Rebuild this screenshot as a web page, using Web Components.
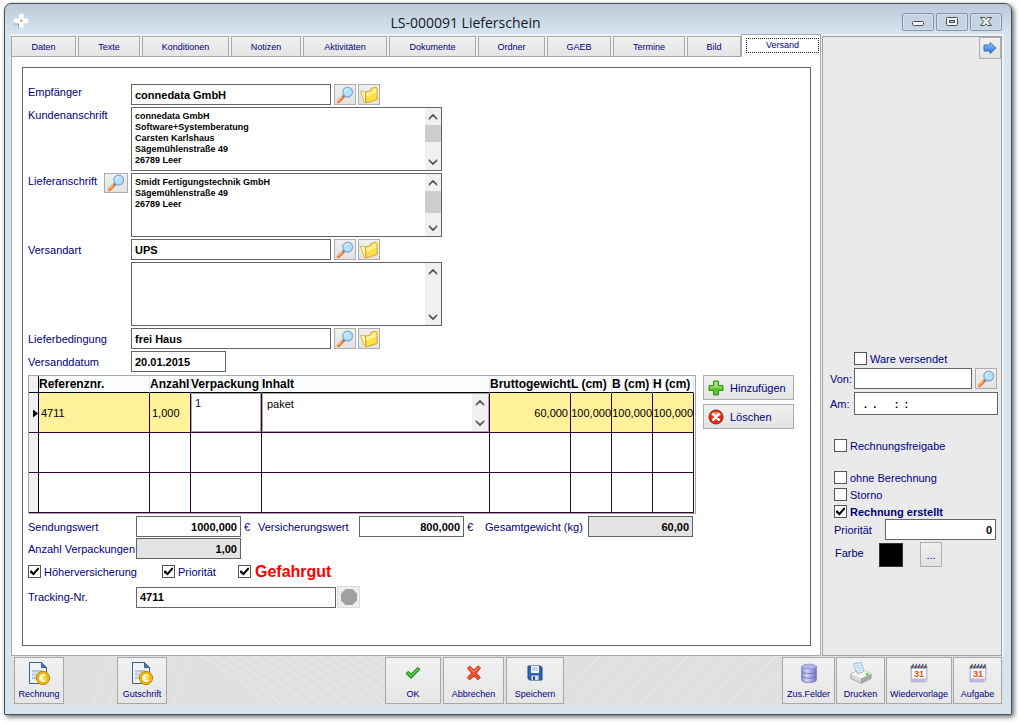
<!DOCTYPE html>
<html lang="de">
<head>
<meta charset="utf-8">
<title>LS-000091 Lieferschein</title>
<style>
  html { background: #fff; }
  body {
    margin: 0;
    box-sizing: border-box;
    min-height: 100vh;
    padding: 3px 8px 8px 4px;
    display: flex;
    flex-direction: column;
    font: 11px "Liberation Sans", Arial, sans-serif;
    color: #00007d;
  }
</style>
</head>
<body>
<delivery-note></delivery-note>

<script>
const ICONS = {
  plus: `<svg viewBox="0 0 16 16"><path d="M5.500 1h5v4.500H15v5h-4.500V15h-5v-4.500H1v-5h4.500z" fill="#5cc433" stroke="#2f8f1a"/><path d="M6.500 2h3v4.500H14v1H2v-1h4.500z" fill="#a5e67c"/></svg>`,
  cancel: `<svg viewBox="0 0 16 16"><circle cx="8" cy="8" r="7" fill="#dc2f14" stroke="#a81a0a"/><path d="M2.500 6a6 5 0 0 1 11 0Q8 9 2.500 6z" fill="#f58a70"/><path d="M5.200 5.200l5.600 5.600M10.800 5.200l-5.600 5.600" stroke="#fff" stroke-width="2.400" stroke-linecap="round"/></svg>`,
  lens: `<svg viewBox="0 0 18 18"><path d="M7.200 10.800L2.400 15.600" stroke="#e8782e" stroke-width="3.200" stroke-linecap="round"/><path d="M6.400 10.600L2 15" stroke="#ffc184" stroke-width="1.300" stroke-linecap="round"/><path d="M8.400 9.600l-1.400 1.400" stroke="#6b7f9c" stroke-width="2.600"/><circle cx="11.700" cy="6.100" r="4.900" fill="#b5e2fb" stroke="#86a8d2" stroke-width="1.300"/><path d="M8.300 6a3.400 3.400 0 0 1 4.600-3.200Q9.800 3.400 8.300 6z" fill="#fff"/></svg>`,
  folder: `<svg viewBox="0 0 18 18"><path d="M.5 5.500L3 5l2.500 1v11L4 15.500z" fill="#fff3b4" stroke="#d0a52c" stroke-width=".8"/><path d="M5.500 6l5-1.200.6-2.400 5-1.200 1 1v11.300L6 17z" fill="#ffdf45" stroke="#cda021" stroke-width=".9"/><path d="M6.300 6.800l5.400-1.300.6-2.400 3.900-.9v4.300l-9.800 4z" fill="#fff09a"/></svg>`,
  arrow: `<svg viewBox="0 0 16 16"><defs><linearGradient id="a" x2="0" y2="1"><stop stop-color="#9ad0fb"/><stop offset="1" stop-color="#1d6fd0"/></linearGradient></defs><path d="M2 5h6V2.500L14 8l-6 5.500V11H2z" fill="url(#a)" stroke="#2a6cba" stroke-width=".9"/></svg>`,
  invoice: `<svg viewBox="0 0 24 24"><path d="M2.500 1.500h12l5 5v16h-17z" fill="#eef3fb" stroke="#3e5f8a"/><path d="M14.500 1.500v5h5z" fill="#4e7db5" stroke="#3e5f8a"/><path d="M5 9h10v9H5z" fill="#bac7da"/><path d="M5 12h9M5 15h9" stroke="#eef3fb"/><circle cx="16" cy="17" r="6.600" fill="#f3bd0c" stroke="#b88700"/><circle cx="16" cy="17" r="4.600" fill="#ffd02e" stroke="#d9a300" stroke-width=".7"/><path d="M18.200 14.800a3 3 0 1 0 0 4.400M12.300 16.400h4M12.300 17.900h4" stroke="#fff" stroke-width="1.400" fill="none"/></svg>`,
  ok: `<svg viewBox="0 0 16 16"><path d="M1 8.500L3.200 6.300 6 9l6.500-6.500 2.500 1.800L6 13.500z" fill="#2fb02a" stroke="#1b8a1a" stroke-linejoin="round"/><path d="M3 7.800L6 10.500 12.800 4" stroke="#7fe06c" fill="none"/></svg>`,
  cross: `<svg viewBox="0 0 16 16"><path d="M3.500 1L8 5l4-4.200L14.500 3l-4 5 3.800 4.500L12 14.800 8 11l-4.500 4L1.300 12.500 5.500 8 1.500 3.500z" fill="#f0502c" stroke="#c5361c" stroke-linejoin="round"/><path d="M3.500 3L8 7l4-4" stroke="#ff9c7c" fill="none"/></svg>`,
  save: `<svg viewBox="0 0 16 16"><path d="M1 1h12.500L15 2.500V15H2.500L1 13.500z" fill="#2c64b8" stroke="#1b478c"/><path d="M4 1h8v7H4z" fill="#f4f6fa"/><path d="M5 3h6M5 5h6" stroke="#9fb0c4"/><path d="M4.500 10.500h7V15h-7z" fill="#d9e0ea"/><path d="M6 11.500h2V15H6z" fill="#1b478c"/></svg>`,
  database: `<svg viewBox="0 0 22 24"><defs><linearGradient id="d"><stop stop-color="#8f8fd4"/><stop offset=".35" stop-color="#d2d2fa"/><stop offset="1" stop-color="#7676be"/></linearGradient></defs><path d="M3 5v14.500c0 4 16 4 16 0V5z" fill="url(#d)" stroke="#7272ba" stroke-width=".8"/><path d="M3 10c0 3.500 16 3.500 16 0M3 15c0 3.500 16 3.500 16 0" stroke="#6b6bb4" fill="none" stroke-width=".9"/><ellipse cx="11" cy="5" rx="8" ry="2.600" fill="#b7b7f0" stroke="#8585c8" stroke-width=".8"/></svg>`,
  printer: `<svg viewBox="0 0 24 24"><path d="M4 2l8-1.500 4 10.500-8 2.500z" fill="#e2f1ff" stroke="#7ea8cf" stroke-width=".8"/><path d="M6.500 4.500l5-1M7.500 7l5-1M8.500 9.500l5-1" stroke="#9cc6ec"/><path d="M1 13l6-3 2 2.500 6-2 .5-1.500 7.500 4v5l-11 5.500L1 18z" fill="#d8d8d8" stroke="#909090" stroke-width=".8"/><path d="M1 13l11 5 11-5-7.500-4L15 11l-7 2.500L6 10.500z" fill="#f4f4f4"/><path d="M12 18v5.500l11-5.500v-5z" fill="#a6a6a6"/><circle cx="18.800" cy="13.300" r="1.300" fill="#3ed22b"/></svg>`,
  calendar: `<svg viewBox="0 0 22 24"><path d="M2.500 5h17v15l-2 1.500h-15z" fill="#fdfdff" stroke="#9a9ac4"/><path d="M2 4h18v3H2z" fill="#85859a"/><path d="M3 7l2-5M6.500 7l2-5M10 7l2-5M13.500 7l2-5M17 7l2-5" stroke="#40404a" stroke-width="1.100"/><path d="M3 18h16l-2 3H3z" fill="#b9b9e2"/><text x="11" y="16.500" text-anchor="middle" font-family="Liberation Sans, Arial, sans-serif" font-weight="bold" font-size="10" fill="#f0500c">31</text></svg>`,
  stop: `<svg viewBox="0 0 18 18"><path d="M5.500 1h7L17 5.500v7L12.500 17h-7L1 12.500v-7z" fill="#a0a0a0"/></svg>`,
  up: `<svg viewBox="0 0 10 8"><path d="M1 6.500V5l4-4 4 4v1.500L5 3z" fill="#555" stroke="#555" stroke-width=".6"/></svg>`,
  down: `<svg viewBox="0 0 10 8"><path d="M1 1.500V3l4 4 4-4V1.500L5 5z" fill="#555" stroke="#555" stroke-width=".6"/></svg>`,
  logo: `<svg viewBox="0 0 16 16"><path d="M6 1h4.500v4.500H15V10h-4.500v5H6v-5H1V5.500h5z" fill="#fff" stroke="#e6ecf1" stroke-width=".8"/><path d="M1 11h4.500v4.500" stroke="#8ea0b0" fill="none" stroke-width=".9"/><circle cx="8.200" cy="7.800" r="1.200" fill="#f08a3c"/></svg>`,
  minimize: `<svg viewBox="0 0 16 16"><rect x="2.500" y="7.500" width="11" height="4" rx="1" fill="#f4f4f4" stroke="#4b5058"/></svg>`,
  maximize: `<svg viewBox="0 0 16 16"><rect x="2.500" y="3.500" width="11" height="8" rx="1" fill="#f4f4f4" stroke="#4b5058"/><rect x="5.500" y="6.500" width="5" height="2" fill="#b9c8d7" stroke="#4b5058"/></svg>`,
  close: `<svg viewBox="0 0 16 16"><path d="M2.500 3.500h4L8 5.300l1.500-1.800h4L10.200 7.500l3.300 4h-4L8 9.700l-1.500 1.800h-4l3.300-4z" fill="#f4f4f4" stroke="#4b5058"/></svg>`
};

function define(name, render) {
  customElements.define(name, class extends HTMLElement {
    constructor() { super(); this.attachShadow({ mode: "open" }); }
    attr(key, fallback = "") { return this.getAttribute(key) ?? fallback; }
    connectedCallback() {
      if (this.shadowRoot.childNodes.length) return;
      const template = document.createElement("template");
      template.innerHTML = render(this);
      this.shadowRoot.append(template.content.cloneNode(true));
    }
  });
}

define("ui-icon", el => `
  <style>
    :host { display: block; flex: none; width: var(--icon-size, 18px); height: var(--icon-size, 18px); }
    svg { display: block; width: 100%; height: 100%; }
  </style>${ICONS[el.attr("name")]}`);

define("icon-button", el => `
  <style>
    :host { display: block; flex: none; width: 22px; height: 21px; }
    button {
      box-sizing: border-box; width: 100%; height: 100%; padding: 0;
      display: flex; align-items: center; justify-content: center;
      border: 1px solid #adadad; background: linear-gradient(#f0f0f0, #e2e2e2);
      font: inherit; color: #00007d;
    }
    button:disabled { border-color: #dcdcdc; background: #eee; }
  </style>
  <button type="button" aria-label="${el.attr("label")}" ${el.hasAttribute("disabled") ? "disabled" : ""}>${
    el.hasAttribute("icon") ? `<ui-icon name="${el.attr("icon")}"></ui-icon>` : "<slot></slot>"}</button>`);

define("caption-button", el => `
  <style>
    :host { display: block; width: 32px; height: 18px; --icon-size: 16px; }
    button {
      box-sizing: border-box; width: 100%; height: 100%; padding: 0;
      display: flex; align-items: center; justify-content: center;
      border: 1px solid #8293ab; border-radius: 2px; background: #c6d4e2;
      box-shadow: inset 0 0 0 1px #d3dfeb;
    }
  </style>
  <button type="button" aria-label="${el.attr("label")}"><ui-icon name="${el.attr("icon")}"></ui-icon></button>`);

define("app-window", el => `
  <style>
    :host {
      box-sizing: border-box; flex: 1; display: flex; flex-direction: column;
      border: 1px solid #4a4e52; border-radius: 7px 7px 1px 1px;
      padding: 0 7px 7px 6px;
      background: linear-gradient(#bccad8, #d6e4f0 30px);
      box-shadow: 2px 2px 5px rgba(0, 0, 0, .6);
    }
    header { height: 30px; display: flex; align-items: center; }
    header > ui-icon { --icon-size: 16px; margin: 4px 0 0 2px; }
    h1 {
      flex: 1; margin: 0; padding-top: 8px; text-align: center;
      font: 14px/20px "Open Sans", "Noto Sans", sans-serif; color: #15151f;
    }
    .caption { display: flex; gap: 2px; padding: 6px 2px 0 0; }
    main { flex: 1; display: flex; flex-direction: column; background: #f1f1f1; }
  </style>
  <header>
    <ui-icon name="logo"></ui-icon>
    <h1>${el.attr("heading")}</h1>
    <div class="caption">
      <caption-button icon="minimize" label="Minimieren"></caption-button>
      <caption-button icon="maximize" label="Maximieren"></caption-button>
      <caption-button icon="close" label="Schließen"></caption-button>
    </div>
  </header>
  <main><slot></slot></main>`);

const TABS = [["Daten", 65], ["Texte", 62], ["Konditionen", 87], ["Notizen", 70], ["Aktivitäten", 84],
  ["Dokumente", 87], ["Ordner", 67], ["GAEB", 64], ["Termine", 72], ["Bild", 54], ["Versand", 78]];
define("tab-strip", () => `
  <style>
    :host {
      display: grid; align-items: end; gap: 2px; height: 22px;
      grid-template-columns: ${TABS.map(([, size]) => `minmax(0, ${size}fr)`).join(" ")};
    }
    button {
      box-sizing: border-box; height: 20px; padding: 0; min-width: 0;
      border: 1px solid #a8a8a8; border-bottom: 0; background: linear-gradient(#f1f1f1, #e4e4e4);
      font: 9px "Liberation Sans", Arial, sans-serif; color: #00007d;
    }
    button[aria-selected=true] {
      position: relative; height: 23px; margin: 0 0 -1px -2px; padding: 3px 1px 4px 4px; background: #fff;
    }
    span { display: block; }
    [aria-selected=true] span { line-height: 13px; border: 1px dotted #222; }
  </style>
  ${TABS.map(([text]) => `<button type="button" role="tab" aria-selected="${text === "Versand"}"><span>${text}</span></button>`).join("")}`);

define("scroll-track", el => `
  <style>
    :host {
      flex: none; width: 16px; display: flex; flex-direction: column; align-items: center;
      background: #f0f0f0; box-sizing: border-box; padding: 5px 0 4px;
    }
    ui-icon { width: 10px; height: 8px; }
    div { flex: 1; width: 100%; padding-top: 4px; }
    i { display: block; height: ${el.attr("thumb", "0")}px; background: #cdcdcd; }
  </style>
  <ui-icon name="up"></ui-icon><div><i></i></div><ui-icon name="down"></ui-icon>`);

define("form-field", el => {
  const hint = el.hasAttribute("hint") ? `aria-label="${el.attr("hint")}"` : "";
  const control = el.hasAttribute("memo")
    ? `<div class="memo"><textarea id="field" ${hint}>${el.attr("value")}</textarea><scroll-track thumb="${el.attr("thumb", "0")}"></scroll-track></div>`
    : `<input id="field" type="text" value="${el.attr("value")}" ${el.hasAttribute("readonly") ? "readonly" : ""}>`;
  return `
  <style>
    :host { display: flex; align-items: center; }
    :host([top]) { align-items: flex-start; }
    .caption { flex: none; box-sizing: border-box; width: var(--label-width, 103px); display: flex; justify-content: space-between; padding-right: 3px; }
    label { line-height: 16px; white-space: nowrap; }
    .control { display: flex; align-items: center; }
    input, .memo {
      box-sizing: border-box; width: var(--field-width, 200px); height: var(--field-height, 21px);
      border: 1px solid #646464; border-radius: 0; background: #fff; color: #000;
    }
    input { padding: 0 3px; font: bold 11px "Liberation Sans", Arial, sans-serif; outline: 0; }
    :host([number]) input { text-align: right; }
    input:read-only { background: #e3e3e3; }
    .memo { width: 311px; height: 64px; display: flex; }
    textarea {
      flex: 1; min-width: 0; box-sizing: border-box; margin: 0; padding: 3px; border: 0; resize: none; overflow: hidden;
      background: #fff; color: #000; font: bold 9px/11px "Liberation Sans", Arial, sans-serif; outline: 0;
    }
    slot:not([name]) { display: flex; align-items: center; gap: 2px; margin-left: 3px; }
  </style>
  <div class="caption"><label for="field">${el.attr("label")}</label><slot name="tool"></slot></div>
  <div class="control">${control}<slot></slot></div>`;
});

define("check-field", el => `
  <style>
    :host { display: flex; align-items: center; height: 13px; }
    input {
      appearance: none; box-sizing: border-box; flex: none; width: 13px; height: 13px; margin: 0;
      border: 1px solid #555; background: #fff; display: grid; place-items: center;
    }
    input:checked::before {
      content: ""; width: 9px; height: 9px; background: #000;
      clip-path: polygon(0 45%, 15% 35%, 38% 62%, 88% 5%, 100% 12%, 100% 25%, 40% 95%, 0 60%);
    }
    label { padding-left: 3px; white-space: nowrap; font-weight: var(--check-weight, normal); }
    :host([alert]) label { font-size: 16px; font-weight: bold; color: #f00; padding-left: 4px; }
  </style>
  <input id="box" type="checkbox" ${el.hasAttribute("checked") ? "checked" : ""}><label for="box">${el.attr("label")}</label>`);

define("command-button", el => `
  <style>
    :host { display: block; --icon-size: 16px; }
    button {
      box-sizing: border-box; width: 100%; height: 25px; padding: 0 4px;
      display: flex; align-items: center; gap: 6px;
      border: 1px solid #adadad; background: linear-gradient(#f0f0f0, #e3e3e3);
      font: 11px "Liberation Sans", Arial, sans-serif; color: #00007d;
    }
  </style>
  <button type="button"><ui-icon name="${el.attr("icon")}"></ui-icon><slot></slot></button>`);

define("tool-button", el => `
  <style>
    :host { display: block; flex: none; }
    button {
      box-sizing: border-box; width: 100%; height: 47px; padding: 0 0 3px;
      display: flex; flex-direction: column; align-items: center; justify-content: flex-end;
      border: 1px solid #a8a8a8; background: linear-gradient(#f1f1f1, #e6e6e6);
      font: 9px/12px "Liberation Sans", Arial, sans-serif; color: #00007d; white-space: nowrap;
    }
    div { height: 26px; display: flex; align-items: center; padding-bottom: 2px; }
  </style>
  <button type="button"><div><ui-icon name="${el.attr("icon")}"></ui-icon></div><slot></slot></button>`);

define("package-table", () => {
  const columns = [["", 10], ["Referenznr.", 111], ["Anzahl", 41], ["Verpackung", 71], ["Inhalt", 228],
    ["Bruttogewicht", 81], ["L (cm)", 41], ["B (cm)", 41], ["H (cm)", 41]];
  const blank = `<tr>${"<td></td>".repeat(9)}</tr>`;
  return `
  <style>
    :host { display: block; flex: none; border: 1px solid #a8a8a8; padding-right: 1px; }
    table { width: 665px; table-layout: fixed; border-collapse: separate; border-spacing: 0; color: #000; font-size: 11px; }
    th {
      box-sizing: border-box; height: 17px; padding: 0; text-align: left; white-space: nowrap;
      font-size: 12px; line-height: 15px; background: #fbfcfd;
      border-bottom: 1px solid #000; border-right: 1px solid #dfe6f5;
    }
    td { box-sizing: border-box; height: 40px; padding: 0 2px; border-right: 1px solid #360036; border-bottom: 1px solid #360036; }
    th:first-child, td:first-child { background: #f0f0f0; border-right-color: #000; padding: 0; }
    tr.current td { background: #fff09a; }
    tr.current td:first-child { background: #f0f0f0; }
    tr.current td.edit { padding: 0; background: #fff; }
    td.num { text-align: right; }
    td.size { padding: 0; }
    .edit div { box-sizing: border-box; height: 39px; display: flex; border: 1px solid #a8a8a8; }
    textarea {
      box-sizing: border-box; flex: 1; min-width: 0; height: 37px; margin: 0; padding: 4px; border: 0; resize: none; overflow: hidden;
      font: 11px/13px "Liberation Sans", Arial, sans-serif; background: #fff; color: #000;
    }
    textarea.one { padding: 3px; color: #360036; }
    i { display: block; width: 5px; height: 8px; margin: 2px 0 0 4px; background: #000; clip-path: polygon(0 0, 100% 50%, 0 100%); }
  </style>
  <table>
    <colgroup>${columns.map(([, w]) => `<col style="width: ${w}px">`).join("")}</colgroup>
    <thead><tr>${columns.map(([text]) => `<th scope="col">${text}</th>`).join("")}</tr></thead>
    <tbody>
      <tr class="current">
        <td><i></i></td><td>4711</td><td>1,000</td>
        <td class="edit"><div><textarea class="one" aria-label="Verpackung">1</textarea></div></td>
        <td class="edit"><div><textarea aria-label="Inhalt">paket</textarea><scroll-track></scroll-track></div></td>
        <td class="num">60,000</td><td class="num size">100,000</td><td class="num size">100,000</td><td class="num size">100,000</td>
      </tr>
      ${blank}${blank}
    </tbody>
  </table>`;
});

define("shipping-form", () => `
  <style>
    :host {
      box-sizing: border-box; flex: 1; display: block; padding: 10px 9px 9px 10px;
      border: 1px solid #a8a8a8; background: #fff;
    }
    form { box-sizing: border-box; height: 100%; min-height: 579px; border: 1px solid #646464; padding: 16px 5px 0; }
    .fields { display: grid; gap: 2px; }
    .tool { width: 24px; height: 20px; }
    .date { --field-width: 95px; }
    .packages { display: flex; gap: 7px; margin-top: 3px; }
    .commands { width: 91px; display: grid; gap: 4px; align-content: start; }
    .sums { display: grid; grid-template-columns: 230px 227px auto; justify-content: start; gap: 1px 0; margin-top: 2px; --field-width: 105px; --label-width: 108px; }
    .insured { --label-width: 101px; }
    .weight { --label-width: 103px; }
    .checks { display: grid; grid-template-columns: 134px 76px auto; justify-content: start; margin: 6px 0 8px; }
    .tracking { --label-width: 108px; }
    .stop { width: 23px; height: 22px; margin-left: -2px; }
  </style>
  <form>
    <div class="fields">
      <form-field top label="Empfänger" value="connedata GmbH"><icon-button icon="lens" label="Suchen"></icon-button><icon-button icon="folder" label="Öffnen"></icon-button></form-field>
      <form-field top memo thumb="17" label="Kundenanschrift" value="connedata GmbH&#10;Software+Systemberatung&#10;Carsten Karlshaus&#10;Sägemühlenstraße 49&#10;26789 Leer"></form-field>
      <form-field top memo thumb="22" label="Lieferanschrift" value="Smidt Fertigungstechnik GmbH&#10;Sägemühlenstraße 49&#10;26789 Leer"><icon-button class="tool" slot="tool" icon="lens" label="Suchen"></icon-button></form-field>
      <form-field label="Versandart" value="UPS"><icon-button icon="lens" label="Suchen"></icon-button><icon-button icon="folder" label="Öffnen"></icon-button></form-field>
      <form-field memo hint="Versandhinweis"></form-field>
      <form-field label="Lieferbedingung" value="frei Haus"><icon-button icon="lens" label="Suchen"></icon-button><icon-button icon="folder" label="Öffnen"></icon-button></form-field>
      <form-field class="date" label="Versanddatum" value="20.01.2015"></form-field>
    </div>
    <div class="packages">
      <package-table></package-table>
      <div class="commands">
        <command-button icon="plus">Hinzufügen</command-button>
        <command-button icon="cancel">Löschen</command-button>
      </div>
    </div>
    <div class="sums">
      <form-field number label="Sendungswert" value="1000,000">€</form-field>
      <form-field class="insured" number label="Versicherungswert" value="800,000">€</form-field>
      <form-field class="weight" number readonly label="Gesamtgewicht (kg)" value="60,00"></form-field>
      <form-field number readonly label="Anzahl Verpackungen" value="1,00"></form-field>
    </div>
    <div class="checks">
      <check-field checked label="Höherversicherung"></check-field>
      <check-field checked label="Priorität"></check-field>
      <check-field checked alert label="Gefahrgut"></check-field>
    </div>
    <form-field class="tracking" label="Tracking-Nr." value="4711"><icon-button class="stop" disabled icon="stop" label="Sendung verfolgen"></icon-button></form-field>
  </form>`);

define("status-panel", () => `
  <style>
    :host { box-sizing: border-box; display: block; margin-top: 2px; border: 1px solid #a0a0a0; background: #eaeaea; }
    .next { margin-left: auto; height: 22px; --icon-size: 16px; }
    form { padding: 293px 2px 0 7px; }
    .sent { display: grid; gap: 3px; --label-width: 24px; --field-width: 118px; }
    .sent check-field { margin-left: 24px; }
    .time { --field-width: 144px; --field-height: 23px; }
    .flags { display: grid; gap: 4px; margin: 24px 0 1px 4px; }
    .release { margin-bottom: 15px; }
    .done { --check-weight: bold; }
    .priority { --label-width: 51px; --field-width: 111px; margin-left: 4px; }
    .colour { display: flex; align-items: center; margin: 2px 0 0 5px; }
    .colour label { width: 44px; line-height: 16px; padding-bottom: 4px; }
    .colour input { appearance: none; width: 24px; height: 24px; border: 1px solid #333; padding: 0; background: #000; }
    .colour input::-webkit-color-swatch-wrapper { padding: 0; }
    .colour input::-webkit-color-swatch { border: 0; border-radius: 0; }
    .colour icon-button { height: 25px; margin-left: 17px; }
  </style>
  <icon-button class="next" icon="arrow" label="Weiter"></icon-button>
  <form>
    <div class="sent">
      <check-field label="Ware versendet"></check-field>
      <form-field label="Von:" value=""><icon-button icon="lens" label="Suchen"></icon-button></form-field>
      <form-field class="time" label="Am:" value="  .  .      :  :"></form-field>
    </div>
    <div class="flags">
      <check-field class="release" label="Rechnungsfreigabe"></check-field>
      <check-field label="ohne Berechnung"></check-field>
      <check-field label="Storno"></check-field>
      <check-field class="done" checked label="Rechnung erstellt"></check-field>
    </div>
    <form-field class="priority" number label="Priorität" value="0"></form-field>
    <div class="colour"><label for="colour">Farbe</label><input id="colour" type="color" value="#000000"><icon-button label="Farbe wählen">...</icon-button></div>
  </form>`);

const strokes = (from, to, step, lean) => {
  let d = "";
  for (let x = from; x < to; x += step) d += `M${x} 0q${lean * .55} 22 ${lean} 51`;
  return d;
};
define("action-bar", () => `
  <style>
    :host { position: relative; display: flex; justify-content: space-between; align-items: flex-start; height: 51px; box-sizing: border-box; padding: 1px 2px 0 3px; background: #e0e0e0; overflow: hidden; }
    .lines { position: absolute; left: 0; top: 0; width: 100%; height: 100%; }
    div { position: relative; display: flex; gap: 2px; --icon-size: 16px; }
    .documents { gap: 53px; --icon-size: 24px; }
    .extras { gap: 1px; --icon-size: 22px; }
    .w49 { width: 49px; } .w50 { width: 50px; } .w53 { width: 53px; } .w56 { width: 56px; }
    .w58 { width: 58px; } .w61 { width: 61px; } .w66 { width: 66px; }
  </style>
  <svg class="lines" viewBox="0 0 993 51" preserveAspectRatio="none" fill="none" stroke="#ebebeb">
    <path d="${strokes(190, 390, 13, 70)}"/><path d="${strokes(590, 800, 22, -50)}"/><path stroke="#e6e6e6" d="${strokes(100, 190, 16, -18)}"/>
  </svg>
  <div class="documents">
    <tool-button class="w50" icon="invoice">Rechnung</tool-button>
    <tool-button class="w50" icon="invoice">Gutschrift</tool-button>
  </div>
  <div>
    <tool-button class="w56" icon="ok">OK</tool-button>
    <tool-button class="w61" icon="cross">Abbrechen</tool-button>
    <tool-button class="w58" icon="save">Speichern</tool-button>
  </div>
  <div class="extras">
    <tool-button class="w53" icon="database">Zus.Felder</tool-button>
    <tool-button class="w49" icon="printer">Drucken</tool-button>
    <tool-button class="w66" icon="calendar">Wiedervorlage</tool-button>
    <tool-button class="w49" icon="calendar">Aufgabe</tool-button>
  </div>`);

define("delivery-note", () => `
  <style>
    :host { flex: 1; display: flex; flex-direction: column; }
    .body { flex: 1; display: grid; grid-template-columns: 1fr 180px; gap: 1px; padding-right: 2px; }
    .page { display: flex; flex-direction: column; min-width: 0; }
  </style>
  <app-window heading="LS-000091 Lieferschein">
    <div class="body">
      <div class="page"><tab-strip></tab-strip><shipping-form></shipping-form></div>
      <status-panel></status-panel>
    </div>
    <action-bar></action-bar>
  </app-window>`);
</script>
</body>
</html>
